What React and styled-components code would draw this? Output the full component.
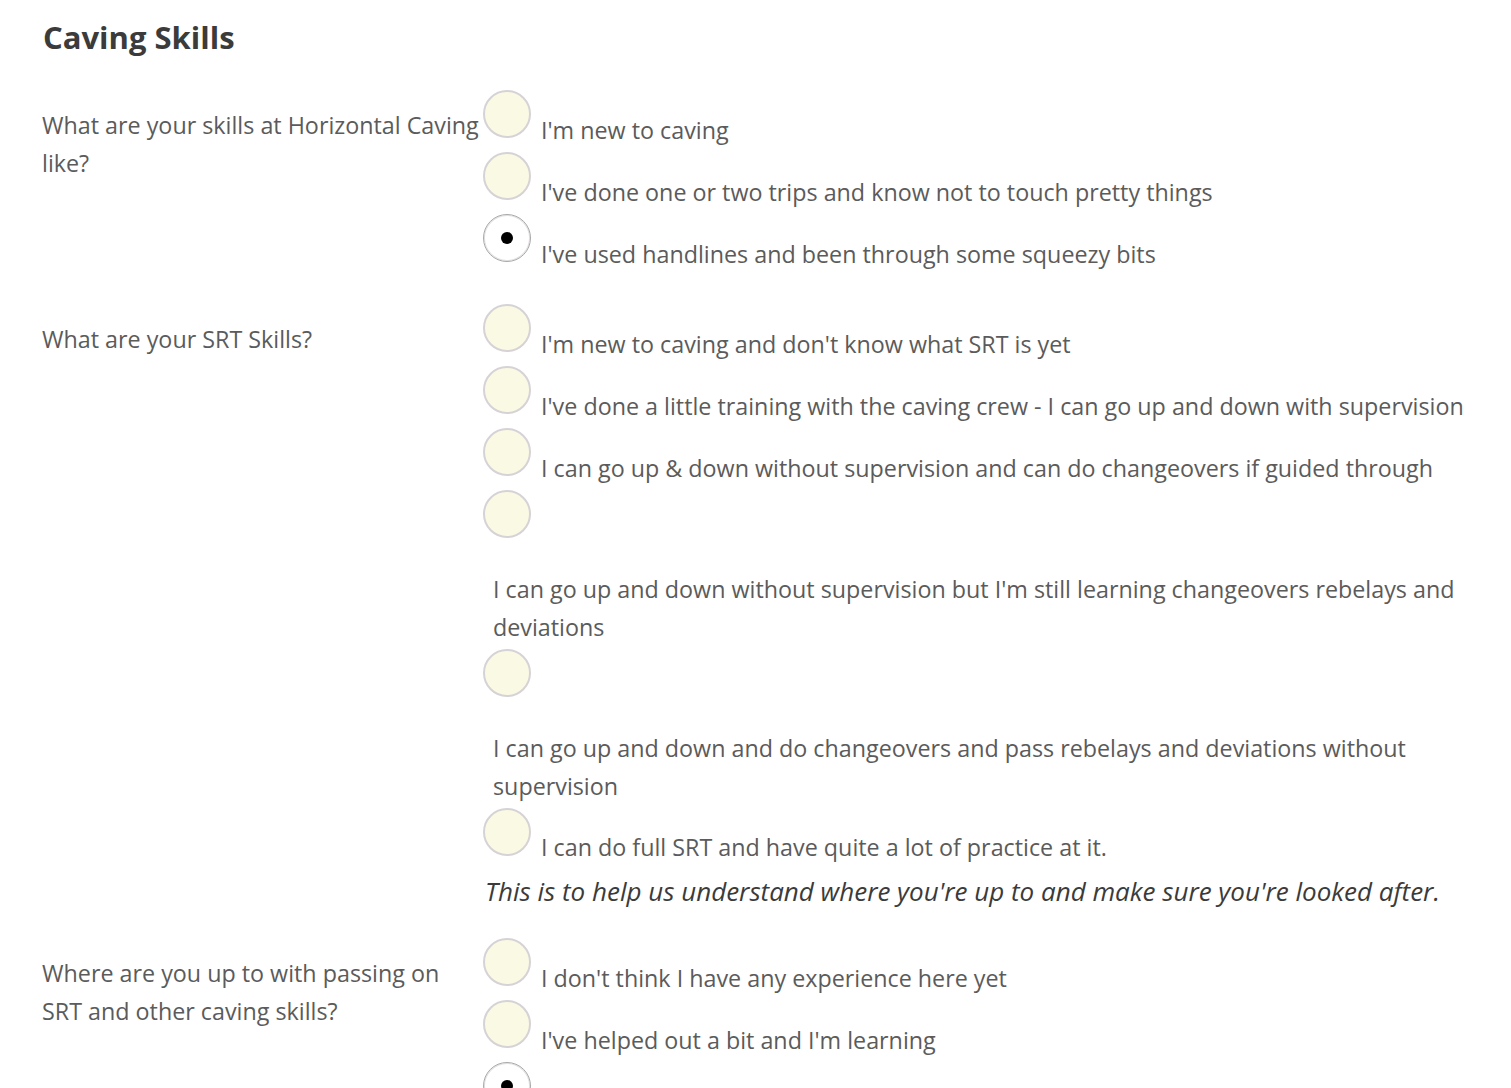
import React from "react";
import styled, { createGlobalStyle } from "styled-components";

const Global = createGlobalStyle`
  html, body { margin: 0; padding: 0; background: #fff; }
  body { font-family: "Open Sans", "Noto Sans", sans-serif; color: #5b5b5b; }
`;

const Page = styled.div`
  padding: 14px 42px 0 42px;
`;

const Title = styled.h2`
  margin: 0 0 30px 1px;
  font-size: 31px;
  font-weight: 700;
  color: #3b3b3b;
  line-height: 46px;
`;

const Field = styled.div`
  display: grid;
  grid-template-columns: 441px 1fr;
  margin-bottom: 28px;
`;

const Question = styled.div`
  padding-top: 16px;
  font-size: 23.3px;
  line-height: 38.4px;
  color: #5b5b5b;
`;

const Options = styled.div`
  display: flex;
  flex-direction: column;
`;

const Option = styled.label`
  display: flex;
  flex-direction: ${(p) => (p.$stacked ? "column" : "row")};
  align-items: ${(p) => (p.$stacked ? "flex-start" : "flex-end")};
  gap: 10px;
  min-height: 62px;
  font-size: 23.3px;
  line-height: 38.4px;
  color: #5b5b5b;
`;

const Radio = styled.span`
  flex: none;
  position: relative;
  box-sizing: border-box;
  width: 48px;
  height: 48px;
  margin-bottom: ${(p) => (p.$stacked ? "0" : "14px")};
  border-radius: 50%;
  border: 2px solid #d6d2d6;
  background: ${(p) => (p.$checked ? "#fff" : "#fafae4")};
  ${(p) =>
    p.$checked &&
    `
    border: 1px solid #a8a8a8;
    box-shadow: inset 0 0 0 1px #e2e2e2;
  `}
  &::after {
    content: "";
    display: ${(p) => (p.$checked ? "block" : "none")};
    position: absolute;
    left: 50%;
    top: 50%;
    width: 12px;
    height: 12px;
    margin: -6px 0 0 -6px;
    border-radius: 50%;
    background: #000;
  }
`;

const Text = styled.span`
  margin-bottom: 3px;
`;

const StackedText = styled.span`
  display: block;
  padding: 22px 0 2px 10px;
`;

const Help = styled.div`
  margin: 2px 0 0 2px;
  font-style: italic;
  font-size: 26px;
  line-height: 38.4px;
  color: #3b3b3b;
`;

const fields = [
  {
    q: "What are your skills at Horizontal Caving like?",
    options: [
      "I'm new to caving",
      "I've done one or two trips and know not to touch pretty things",
      "I've used handlines and been through some squeezy bits",
    ],
    checked: 2,
  },
  {
    q: "What are your SRT Skills?",
    options: [
      "I'm new to caving and don't know what SRT is yet",
      "I've done a little training with the caving crew - I can go up and down with supervision",
      "I can go up & down without supervision and can do changeovers if guided through",
      { stacked: true, t: "I can go up and down without supervision but I'm still learning changeovers rebelays and deviations" },
      { stacked: true, t: "I can go up and down and do changeovers and pass rebelays and deviations without supervision" },
      "I can do full SRT and have quite a lot of practice at it.",
    ],
    checked: -1,
    help: "This is to help us understand where you're up to and make sure you're looked after.",
  },
  {
    q: "Where are you up to with passing on SRT and other caving skills?",
    options: [
      "I don't think I have any experience here yet",
      "I've helped out a bit and I'm learning",
      "I've taught a few people and I'm comfortable doing it",
    ],
    checked: 2,
  },
];

export default function App() {
  return (
    <Page>
      <Global />
      <Title>Caving Skills</Title>
      {fields.map((f, i) => (
        <Field key={i}>
          <Question>{f.q}</Question>
          <Options>
            {f.options.map((o, j) => {
              const stacked = typeof o === "object";
              const t = stacked ? o.t : o;
              return stacked ? (
                <Option key={j} $stacked>
                  <Radio $stacked $checked={f.checked === j} />
                  <StackedText>{t}</StackedText>
                </Option>
              ) : (
                <Option key={j}>
                  <Radio $checked={f.checked === j} />
                  <Text>{t}</Text>
                </Option>
              );
            })}
            {f.help && <Help>{f.help}</Help>}
          </Options>
        </Field>
      ))}
    </Page>
  );
}
